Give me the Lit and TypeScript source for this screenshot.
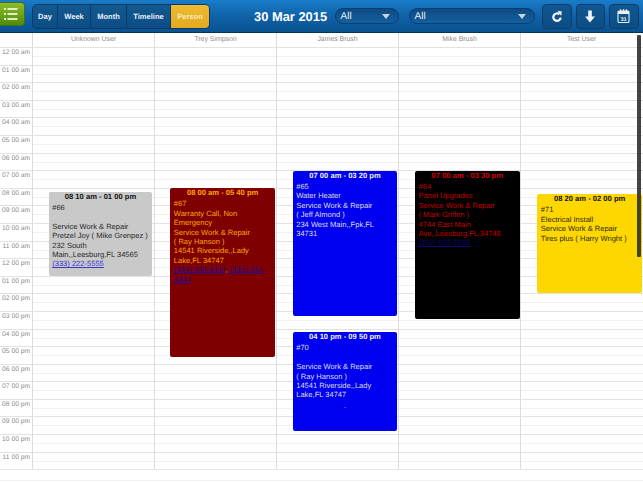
import { LitElement, html, css, svg } from "lit";
import { customElement } from "lit/decorators.js";

const hours = Array.from({ length: 24 }, (_, i) => {
  const h = i % 12 === 0 ? 12 : i % 12;
  return `${String(h).padStart(2, "0")} 00 ${i < 12 ? "am" : "pm"}`;
});
const users = ["Unknown User", "Trey Simpson", "James Brush", "Mike Brush", "Test User"];

type Ev = { x: number; top: number; h: number; w: number; bg: string; fg: string; tfg: string; link: string; time: string; body: any };

const events: Ev[] = [
  { x: 48.7, w: 103.6, top: 191.7, h: 84.3, bg: "#c9c9c9", fg: "#2a2a2a", tfg: "#111", link: "#3838d0", time: "08 10 am - 01 00 pm",
    body: html`#66<br /><br />Service Work &amp; Repair<br />Pretzel Joy ( Mike Grenpez )<br />232 South<br />Main,,Leesburg,FL 34565<br /><u class="lk">(333) 222-5555</u>` },
  { x: 170.3, w: 104.7, top: 188, h: 169, bg: "#7f0000", fg: "#ffa500", tfg: "#ffa500", link: "#1c0c9c", time: "08 00 am - 05 40 pm",
    body: html`#67<br />Warranty Call, Non<br />Emergency<br />Service Work &amp; Repair<br />( Ray Hanson )<br />14541 Riverside,,Lady<br />Lake,FL 34747<br /><u class="lk">(444) 444-4444</u>, <u class="lk">(444) 444-<br />4444</u>` },
  { x: 292.7, w: 104.6, top: 170.7, h: 145.8, bg: "#0000f0", fg: "#dedede", tfg: "#f0f0e0", link: "#fff", time: "07 00 am - 03 20 pm",
    body: html`#65<br />Water Heater<br />Service Work &amp; Repair<br />( Jeff Almond )<br />234 West Main,,Fpk,FL<br />34731` },
  { x: 292.7, w: 104.6, top: 332, h: 98.5, bg: "#0000f0", fg: "#dedede", tfg: "#f0f0e0", link: "#fff", time: "04 10 pm - 09 50 pm",
    body: html`#70<br /><br />Service Work &amp; Repair<br />( Ray Hanson )<br />14541 Riverside,,Lady<br />Lake,FL 34747<div class="dot">.</div>` },
  { x: 415, w: 104.5, top: 170.7, h: 148.5, bg: "#000", fg: "#c00000", tfg: "#d80000", link: "#0a0a78", time: "07 00 am - 03 30 pm",
    body: html`#64<br />Panel Upgrades<br />Service Work &amp; Repair<br />( Mark Griffen )<br />4744 East Main<br />Ave,,Leesburg,FL 34748<br /><u class="lk">(352) 555-5555</u>` },
  { x: 537.3, w: 104.7, top: 194, h: 98.5, bg: "#ffd700", fg: "#2a2a10", tfg: "#111", link: "#00c", time: "08 20 am - 02 00 pm",
    body: html`#71<br />Electrical Install<br />Service Work &amp; Repair<br />Tires plus ( Harry Wright )` },
];

const colX = [32, 154, 276, 398, 520];

@customElement("app-root")
export class AppRoot extends LitElement {
  static styles = css`
    :host { display: block; width: 643px; height: 482px; overflow: hidden; background: #fff; font-family: "Liberation Sans", Arial, sans-serif; position: relative; text-rendering: geometricPrecision; }
    .top { height: 33px; box-sizing: border-box; background: linear-gradient(#1a7cc8, #0f62a8 50%, #0a5290); border-bottom: 1px solid #0b3155; display: flex; align-items: center; }
    .menu { width: 25px; height: 24px; margin-top: -5px; border-radius: 0 4px 4px 0; background: linear-gradient(#8fbd2c, #4f8a0a); border: 1px solid #41701a; border-left: 0; box-sizing: border-box; display: flex; align-items: center; padding-left: 4px; }
    .tabs { margin-left: 7px; display: flex; height: 25px; border-radius: 5px; border: 1px solid #0a3a66; background: linear-gradient(#14598f, #0c4c85); box-sizing: border-box; overflow: hidden; }
    .tab { color: #e8f0f8; font-size: 7.5px; font-weight: bold; display: flex; align-items: center; justify-content: center; border-right: 1px solid #0a3a66; box-sizing: border-box; }
    .tab.on { background: linear-gradient(#efbb30, #e3a91f); color: #f6ecc0; border-right: 0; }
    .date { color: #fff; font-size: 12.9px; font-weight: bold; width: 81px; margin-left: 44px; white-space: nowrap; }
    .sel { height: 16px; border-radius: 8px; background: linear-gradient(#0d4a84, #14609f); border: 1px solid #0a3e70; box-sizing: border-box; color: #e8f0f8; font-size: 10px; display: flex; align-items: center; justify-content: space-between; padding: 0 8px 0 4.5px; }
    .s1 { width: 64px; }
    .s2 { width: 126px; margin-left: 10px; }
    .tri { width: 0; height: 0; border-left: 4px solid transparent; border-right: 4px solid transparent; border-top: 5px solid #c6d4e2; }
    .btns { display: flex; gap: 4px; margin-left: 7px; }
    .btn { width: 29.5px; height: 25px; border-radius: 4px; border: 1px solid #0a3e70; box-sizing: border-box; background: linear-gradient(#11578f, #0d4c85); display: flex; align-items: center; justify-content: center; }
    .heads { display: flex; height: 14px; padding-left: 32px; }
    .h { width: 122px; box-sizing: border-box; border-left: 1px solid #dcdcdc; font-size: 6.9px; color: #8c8c8c; text-align: center; line-height: 14px; height: 14px; }
    .grid { position: relative; height: 435px; }
    .r { position: relative; height: 17.6px; border-top: 1px solid #e2e2e2; box-sizing: border-box; }
    .r::after { content: ""; position: absolute; left: 32px; right: 0; top: 8px; border-top: 1px solid #f1f1f1; }
    .r span { position: absolute; left: 0; width: 30px; text-align: right; top: 0; line-height: 9px; font-size: 6.7px; color: #8a8a8a; white-space: nowrap; }
    .end { border-top: 1px solid #e8e8e8; height: 12px; box-sizing: border-box; border-bottom: 1px solid #f2f2f2; }
    .v { position: absolute; top: 0; height: 422px; width: 1px; background: #dcdcdc; }
    .ev { position: absolute; box-sizing: border-box; border-radius: 2px; padding: 0.3px 3.5px; font-size: 7.55px; line-height: 9.4px; overflow: hidden; white-space: nowrap; }
    .t { font-weight: bold; text-align: center; font-size: 7.6px; line-height: 9px; margin-bottom: 2px; }
    .lk { color: var(--lk); }
    .dot { text-align: center; line-height: 9px; margin-top: 1px; }
    .bar { position: absolute; left: 637px; top: 35px; width: 3.5px; height: 222px; background: #333; border-radius: 1px; opacity: .92; }
  `;

  render() {
    const tabs: [string, number][] = [["Day", 25], ["Week", 33], ["Month", 36], ["Timeline", 44], ["Person", 38]];
    return html`
      <div class="top">
        <div class="menu">
          <svg width="14" height="12" viewBox="0 0 14 12">
            ${[1, 6, 11].map((y) => svg`<rect x="0" y="${y - 0.9}" width="2" height="1.8" fill="#eef5d8"/><rect x="3.5" y="${y - 0.9}" width="10" height="1.8" fill="#eef5d8"/>`)}
          </svg>
        </div>
        <div class="tabs">
          ${tabs.map(([t, w]) => html`<div class="tab ${t === "Person" ? "on" : ""}" style="width:${w}px">${t}</div>`)}
        </div>
        <div class="date">30 Mar 2015</div>
        <div class="sel s1">All<span class="tri"></span></div>
        <div class="sel s2">All<span class="tri"></span></div>
        <div class="btns">
          <div class="btn">
            <svg width="12" height="13" viewBox="0 0 12 13"><path d="M8.4 4.3A3.7 3.7 0 1 0 9.7 7.6" fill="none" stroke="#f2f6fa" stroke-width="2.2"/><path d="M6.6 0.8L10.8 1.4L10.2 6Z" fill="#f2f6fa"/></svg>
          </div>
          <div class="btn">
            <svg width="12" height="13" viewBox="0 0 12 13"><path d="M4.2 0.5h3.6v6H11L6 12.5L1 6.5h3.2Z" fill="#f2f6fa"/></svg>
          </div>
          <div class="btn">
            <svg width="13" height="14" viewBox="0 0 13 14"><rect x="1" y="2" width="11" height="11.5" rx="1" fill="none" stroke="#e8eef4" stroke-width="1.1"/><rect x="1" y="2" width="11" height="3" fill="#e8eef4"/><rect x="3" y="0.3" width="1.3" height="3" fill="#e8eef4"/><rect x="5.9" y="0.3" width="1.3" height="3" fill="#e8eef4"/><rect x="8.8" y="0.3" width="1.3" height="3" fill="#e8eef4"/><text x="6.5" y="11.8" font-size="5.6" font-weight="bold" text-anchor="middle" fill="#e8eef4" font-family="Liberation Sans">31</text></svg>
          </div>
        </div>
      </div>
      <div class="heads">${users.map((u) => html`<div class="h">${u}</div>`)}</div>
      <div class="grid">
        ${hours.map((h) => html`<div class="r"><span>${h}</span></div>`)}
        <div class="end"></div>
        ${colX.map((x) => html`<div class="v" style="left:${x}px"></div>`)}
      </div>
      ${events.map(
        (e) => html`<div class="ev" style="left:${e.x}px;top:${e.top}px;width:${e.w}px;height:${e.h}px;background:${e.bg};color:${e.fg};--lk:${e.link}">
          <div class="t" style="color:${e.tfg}">${e.time}</div>
          ${e.body}
        </div>`
      )}
      <div class="bar"></div>
    `;
  }
}
